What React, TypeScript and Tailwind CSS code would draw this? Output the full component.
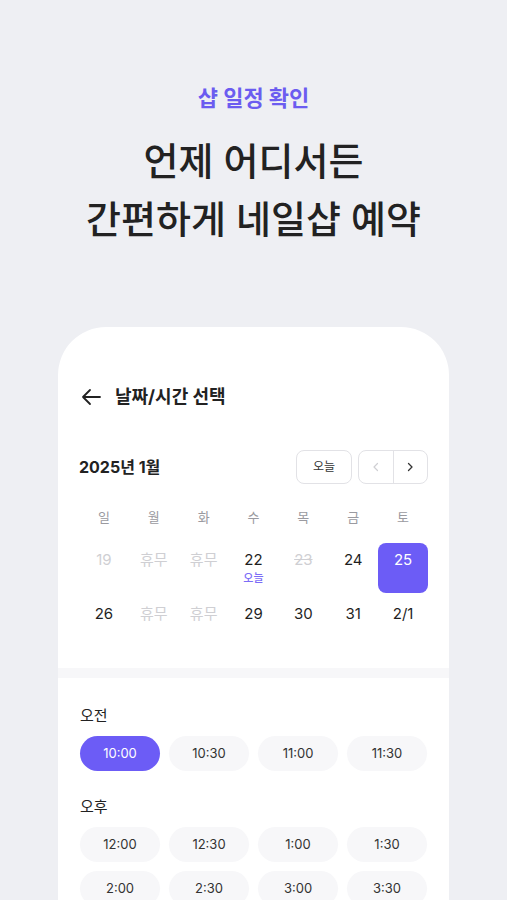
import { ReactNode } from "react";

const font = { fontFamily: 'Inter, "Noto Sans CJK KR", "Noto Sans", sans-serif' };

type Day = { label: string; tone: "normal" | "off" | "past" | "struck" | "selected"; sub?: string };

const weekdays = ["일", "월", "화", "수", "목", "금", "토"];

const days: Day[] = [
  { label: "19", tone: "past" },
  { label: "휴무", tone: "off" },
  { label: "휴무", tone: "off" },
  { label: "22", tone: "normal", sub: "오늘" },
  { label: "23", tone: "struck" },
  { label: "24", tone: "normal" },
  { label: "25", tone: "selected" },
  { label: "26", tone: "normal" },
  { label: "휴무", tone: "off" },
  { label: "휴무", tone: "off" },
  { label: "29", tone: "normal" },
  { label: "30", tone: "normal" },
  { label: "31", tone: "normal" },
  { label: "2/1", tone: "normal" },
];

const morning = ["10:00", "10:30", "11:00", "11:30"];
const afternoon = ["12:00", "12:30", "1:00", "1:30", "2:00", "2:30", "3:00", "3:30"];

function DayCell({ day }: { day: Day }) {
  const toneClass = {
    normal: "text-[#1f1f1f]",
    off: "text-[#cfcfd3] text-[14px]",
    past: "text-[#cfcfd3]",
    struck: "text-[#cfcfd3] line-through",
    selected: "bg-[#6c5cf6] text-white rounded-lg",
  }[day.tone];
  return (
    <div className={`flex h-[50px] flex-col items-center pt-[6px] ${toneClass}`}>
      <span className="text-[15px] leading-[22px]">{day.label}</span>
      {day.sub ? (
        <span className="text-[11px] leading-[14px] font-medium text-[#7c6df7]">{day.sub}</span>
      ) : null}
    </div>
  );
}

function TimeChip({ time, active = false }: { time: string; active?: boolean }) {
  return (
    <button
      className={`h-[35px] rounded-full text-[13px] ${
        active ? "bg-[#6c5cf6] text-white" : "bg-[#f7f7f9] text-[#333]"
      }`}
    >
      {time}
    </button>
  );
}

function Section({ title, children }: { title: string; children: ReactNode }) {
  return (
    <div>
      <p className="text-[15px] leading-[22px] text-[#222]">{title}</p>
      <div className="mt-[9px] grid grid-cols-4 gap-[9px]">{children}</div>
    </div>
  );
}

export default function App() {
  return (
    <div style={font} className="h-[900px] w-full overflow-hidden bg-[#eeeff3]">
      <div className="flex flex-col items-center pt-[83px]">
        <p className="text-[22px] leading-[30px] font-bold text-[#6b5cf0]">샵 일정 확인</p>
        <h1 className="mt-[19px] text-center text-[38px] leading-[58px] font-medium text-[#222]">
          언제 어디서든
          <br />
          간편하게 네일샵 예약
        </h1>
      </div>

      <div className="mx-[58px] mt-[79px] rounded-t-[48px] bg-white">
        <div className="px-[21px] pt-[57px] pb-[21px]">
          <div className="flex items-center">
            <svg width="24" height="24" viewBox="0 0 24 24" fill="none" stroke="#222" strokeWidth="1.8" strokeLinecap="round" strokeLinejoin="round">
              <path d="M21 12H4M11 5l-7 7 7 7" />
            </svg>
            <span className="ml-[12px] text-[18px] leading-[26px] font-bold text-[#222]">날짜/시간 선택</span>
          </div>

          <div className="mt-[40px] flex items-center justify-between">
            <span className="text-[16px] font-bold text-[#222]">2025년 1월</span>
            <div className="flex gap-[6px]">
              <button className="h-[34px] w-[56px] rounded-lg border border-[#e2e2e6] text-[12px] text-[#333]">
                오늘
              </button>
              <div className="flex h-[34px] w-[70px] rounded-lg border border-[#e2e2e6]">
                <button className="flex flex-1 items-center justify-center border-r border-[#e2e2e6]">
                  <svg width="10" height="10" viewBox="0 0 10 10" fill="none" stroke="#cfcfd3" strokeWidth="1.2" strokeLinecap="round" strokeLinejoin="round">
                    <path d="M6.5 1.5L3 5l3.5 3.5" />
                  </svg>
                </button>
                <button className="flex flex-1 items-center justify-center">
                  <svg width="10" height="10" viewBox="0 0 10 10" fill="none" stroke="#333" strokeWidth="1.3" strokeLinecap="round" strokeLinejoin="round">
                    <path d="M3.5 1.5L7 5 3.5 8.5" />
                  </svg>
                </button>
              </div>
            </div>
          </div>

          <div className="mt-[23px] grid grid-cols-7">
            {weekdays.map((w) => (
              <span key={w} className="text-center text-[13px] leading-[20px] text-[#9a9aa0]">
                {w}
              </span>
            ))}
          </div>

          <div className="mt-[16px] grid grid-cols-7 gap-y-[4px]">
            {days.map((d, i) => (
              <DayCell key={i} day={d} />
            ))}
          </div>
        </div>

        <div className="h-[10px] bg-[#f7f7f9]" />

        <div className="flex flex-col gap-[25px] px-[22px] pt-[27px] pb-10">
          <Section title="오전">
            {morning.map((t, i) => (
              <TimeChip key={t} time={t} active={i === 0} />
            ))}
          </Section>
          <Section title="오후">
            {afternoon.map((t) => (
              <TimeChip key={t} time={t} />
            ))}
          </Section>
        </div>
      </div>
    </div>
  );
}
